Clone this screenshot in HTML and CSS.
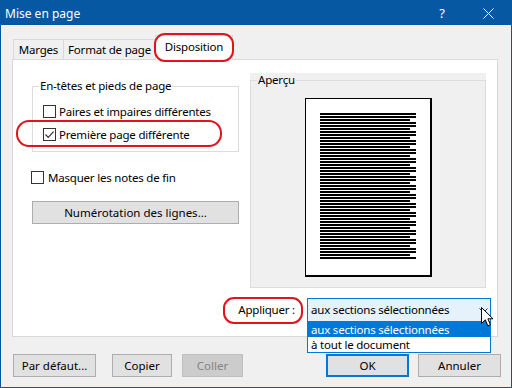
FILE: index.html
```html
<!DOCTYPE html>
<html lang="fr">
<head>
    <meta charset="UTF-8">
    <meta name="viewport" content="width=device-width, initial-scale=1.0">
    <title>Mise en page</title>
    <link rel="stylesheet" href="styles.css">
</head>
<body>
    <div class="window">
        <div class="titlebar">
            <span class="title">Mise en page</span>
            <span class="tb-btn tb-help">?</span>
            <span class="tb-btn">
                <svg width="11" height="11" viewBox="0 0 11 11"><path d="M0.5 0.5 L10.5 10.5 M10.5 0.5 L0.5 10.5" stroke="#fff" stroke-width="1" fill="none"/></svg>
            </span>
        </div>
        <div class="content">
            <div class="tabs">
                <div class="tab tab-marges">Marges</div>
                <div class="tab tab-format">Format de page</div>
                <div class="tab tab-active">Disposition<i class="mark mark-tab"></i></div>
            </div>
            <div class="panel">
                <div class="col-left">
                    <fieldset class="group">
                        <legend>En-têtes et pieds de page</legend>
                        <div class="group-body">
                            <div class="check-row"><span class="box"></span>Paires et impaires différentes</div>
                            <div class="check-row">
                                <span class="box">
                                    <svg width="11" height="11" viewBox="0 0 11 11"><path d="M1.5 5.5 L4.2 8.3 L9.6 2.6" stroke="#333" stroke-width="1.2" fill="none"/></svg>
                                </span>Première page différente<i class="mark mark-first"></i>
                            </div>
                        </div>
                    </fieldset>
                    <div class="check-row check-solo"><span class="box"></span>Masquer les notes de fin</div>
                    <button class="btn btn-wide">Numérotation des lignes...</button>
                </div>
                <div class="col-right">
                    <div class="preview">
                        <fieldset class="preview-group">
                            <legend>Aperçu</legend>
                            <div class="page"><div class="lines"></div></div>
                        </fieldset>
                    </div>
                </div>
                <div class="apply-row">
                    <span class="apply-label">Appliquer :<i class="mark mark-apply"></i></span>
                    <div class="combo">
                        <span>aux sections sélectionnées</span>
                        <svg class="chevron" width="9" height="5" viewBox="0 0 9 5"><path d="M0.5 0.5 L4.5 4.5 L8.5 0.5" stroke="#333" stroke-width="1" fill="none"/></svg>
                        <svg class="cursor" width="13" height="20" viewBox="0 0 13 20"><path d="M0.5 0.5 L0.5 16.5 L4.3 12.8 L6.8 18.8 L9.4 17.7 L6.9 11.8 L12 11.8 Z" fill="#fff" stroke="#000" stroke-width="1"/></svg>
                        <ul class="dropdown">
                            <li class="selected">aux sections sélectionnées</li>
                            <li>à tout le document</li>
                        </ul>
                    </div>
                </div>
            </div>
            <div class="footer">
                <button class="btn btn-defaut">Par défaut...</button>
                <button class="btn btn-copier">Copier</button>
                <button class="btn btn-coller" disabled>Coller</button>
                <span class="spacer"></span>
                <button class="btn btn-ok">OK</button>
                <button class="btn btn-annuler">Annuler</button>
            </div>
        </div>
    </div>
</body>
</html>
```
FILE: styles.css
```css
* {
    box-sizing: border-box;
}
body {
    margin: 0;
    font-family: "Noto Sans", sans-serif;
    font-size: 11.5px;
    letter-spacing: -0.2px;
    color: #000;
}
.window {
    width: 512px;
    height: 388px;
    border: 1px solid #0658a3;
    background-color: #f0f0f0;
}
.titlebar {
    height: 24px;
    background-color: #0658a3;
    color: #fff;
    display: flex;
    align-items: center;
}
.title {
    flex: 1;
    padding-left: 4px;
    font-size: 12px;
    letter-spacing: 0;
}
.tb-btn {
    width: 46px;
    height: 24px;
    display: flex;
    align-items: center;
    justify-content: center;
}
.tb-help {
    font-size: 13px;
}
.content {
    padding: 10px 10px 0 11px;
}

/* tabs */
.tabs {
    display: flex;
    align-items: flex-end;
    height: 24px;
    margin-left: 1px;
    position: relative;
    z-index: 1;
}
.tab {
    height: 20px;
    border: 1px solid #d9d9d9;
    border-bottom: none;
    margin-right: -1px;
    text-align: center;
    line-height: 19px;
    white-space: nowrap;
}
.tab-marges {
    width: 51px;
}
.tab-format {
    width: 93px;
}
.tab-active {
    width: 78px;
    height: 25px;
    margin-bottom: -1px;
    background-color: #fff;
    line-height: 22px;
    position: relative;
}

/* red annotation marks */
.mark {
    position: absolute;
    border: 2px solid #e3121b;
    pointer-events: none;
}
.mark-tab {
    left: -2px;
    top: -3px;
    width: 80px;
    height: 29px;
    border-radius: 11px;
}
.mark-first {
    left: -27px;
    top: -3px;
    width: 206px;
    height: 27px;
    border-radius: 13px;
}
.mark-apply {
    left: -15px;
    top: -1px;
    width: 80px;
    height: 27px;
    border-radius: 11px;
}

/* panel */
.panel {
    width: 486px;
    height: 278px;
    border: 1px solid #d9d9d9;
    background-color: #fff;
    padding: 13px 11px 0 19px;
    display: grid;
    grid-template-columns: 207px 236px;
    column-gap: 11px;
    align-content: start;
    align-items: start;
}
.group {
    margin: 5px 0 0;
    padding: 0;
    min-width: 0;
    border: 1px solid #dcdcdc;
}
.group legend {
    margin-left: 6px;
    padding: 0 1px;
    line-height: 16px;
}
.group-body {
    padding: 6px 0 5px 10px;
}
.check-row {
    display: flex;
    align-items: center;
    gap: 3px;
    height: 23px;
    position: relative;
    white-space: nowrap;
}
.box {
    width: 13px;
    height: 13px;
    border: 1px solid #333;
    background-color: #fff;
    flex: none;
    display: flex;
}
.check-solo {
    height: 16px;
    margin: 17px 0 0 -1px;
    gap: 4px;
}
.btn {
    font: inherit;
    color: #000;
    height: 23px;
    padding: 0;
    border: 1px solid #adadad;
    background-color: #e1e1e1;
}
.btn-wide {
    display: block;
    width: 100%;
    margin-top: 16px;
}

/* preview */
.preview {
    background-color: #f0f0f0;
    height: 215px;
}
.preview-group {
    margin: 0;
    padding: 0;
    height: 215px;
    min-width: 0;
    border: 1px solid #dcdcdc;
}
.preview-group legend {
    margin-left: 6px;
    padding: 0 1px;
    line-height: 14px;
}
.page {
    width: 127px;
    height: 179px;
    margin: 11px auto 0;
    border-style: solid;
    border-color: #000;
    border-width: 1px 2px 2px 1px;
    background-color: #fff;
    padding: 14px 0 0 14px;
}
.lines {
    width: 96px;
    height: 147px;
    background:
        repeating-linear-gradient(#fff0 0 6px, #fff 6px 9px) right top / 6px 100% no-repeat,
        repeating-linear-gradient(#000 0 2px, #fff 2px 3px);
}

/* apply row */
.apply-row {
    grid-column: 1 / -1;
    margin: 10px -5px 0 0;
    display: flex;
    justify-content: flex-end;
    align-items: center;
    height: 24px;
}
.apply-label {
    position: relative;
    line-height: 24px;
    margin-right: 12px;
    white-space: nowrap;
}
.combo {
    position: relative;
    width: 184px;
    height: 24px;
    border: 1px solid #0078d7;
    background-color: #e5f1fb;
    padding-left: 3px;
    line-height: 22px;
    white-space: nowrap;
}
.chevron {
    position: absolute;
    left: 171px;
    top: 9px;
}
.cursor {
    position: absolute;
    left: 173px;
    top: 8px;
    z-index: 3;
}
.dropdown {
    position: absolute;
    left: -1px;
    top: calc(100% + 1px);
    width: 184px;
    margin: 0;
    padding: 0;
    list-style: none;
    background-color: #fff;
    border: 1px solid #0078d7;
    border-top: none;
    z-index: 2;
}
.dropdown li {
    height: 15px;
    line-height: 15px;
    padding-left: 3px;
}
.dropdown .selected {
    background-color: #0078d7;
    color: #fff;
}

/* footer buttons */
.footer {
    display: flex;
    margin: 17px 0 0 1px;
}
.btn-defaut {
    width: 83px;
}
.btn-copier {
    width: 60px;
    margin-left: 16px;
}
.btn-coller {
    width: 61px;
    margin-left: 10px;
    background-color: #cccccc;
    border-color: #bfbfbf;
    color: #838383;
}
.spacer {
    flex: 1;
}
.btn-ok {
    width: 83px;
    border: 2px solid #0078d7;
}
.btn-annuler {
    width: 83px;
    margin-left: 9px;
}
```
